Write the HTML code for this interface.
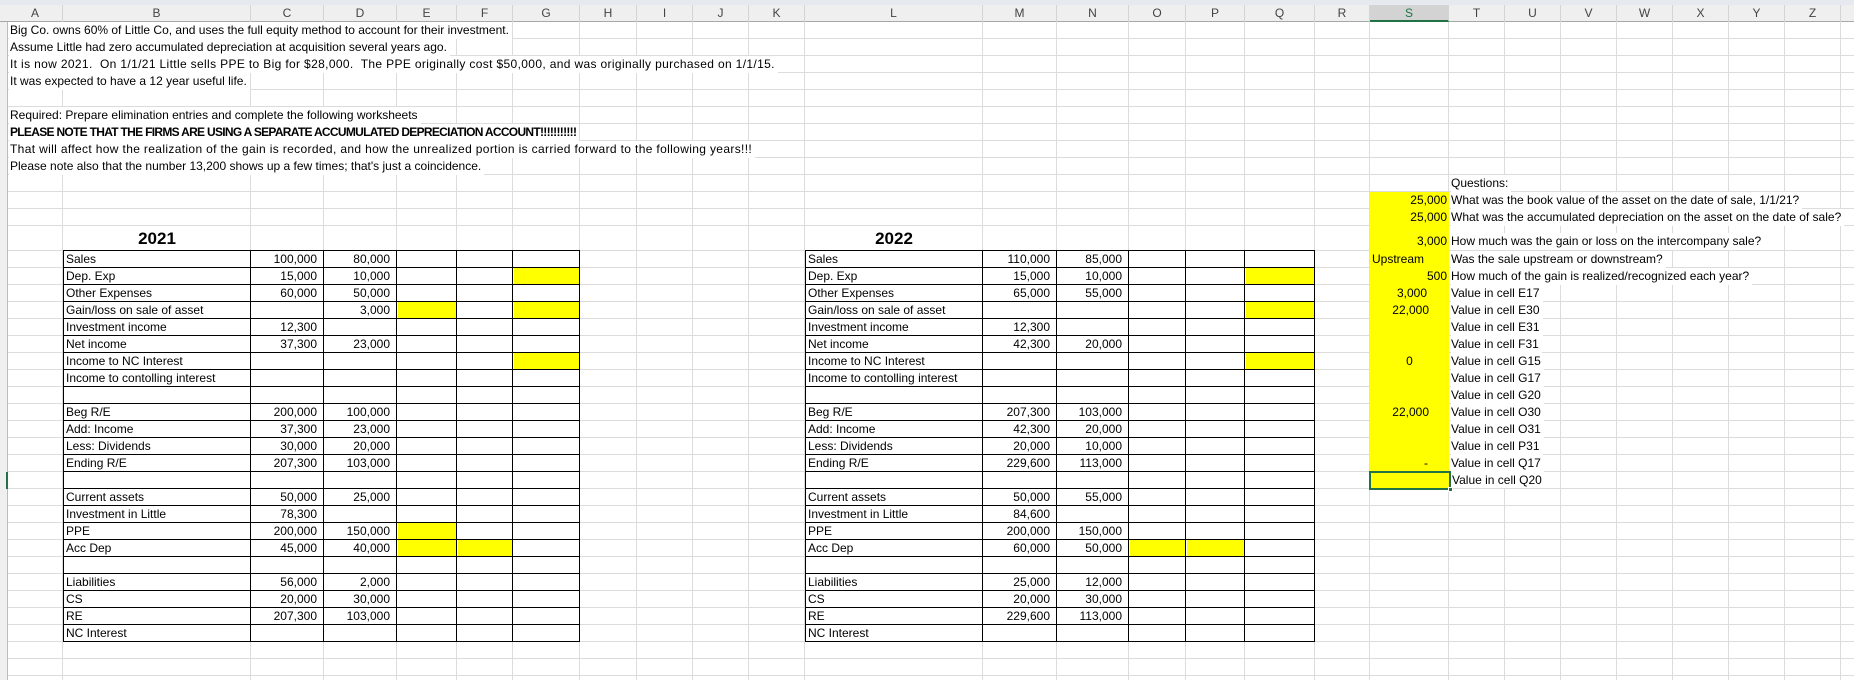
<!DOCTYPE html>
<html><head><meta charset="utf-8">
<style>
*{margin:0;padding:0;box-sizing:border-box}
html,body{width:1854px;height:680px;overflow:hidden;background:#fff}
body{position:relative;font-family:"Liberation Sans",Arial,sans-serif;font-size:12px;color:#000}
.a{position:absolute}
.t{position:absolute;height:17px;line-height:17px;white-space:nowrap;font-size:12px}
.w{background:#fff;padding-right:3px}
.r{text-align:right}
.v{position:absolute;width:1px;background:#dcdcdc;top:22px;height:658px}
.hl{position:absolute;left:8px;width:1846px;height:1px;background:#dcdcdc}
.h{position:absolute;top:5px;height:17px;line-height:17px;text-align:center;font-size:12px;color:#444;border-right:1px solid #d4d4d4}
.bv{position:absolute;width:1px;background:#000;top:250px;height:392px}
.tb{position:absolute;top:250px;height:392px;background:repeating-linear-gradient(to bottom,#000 0 1px,transparent 1px 17px)}
.y{position:absolute;background:#ffff00;height:16px}
</style></head><body>
<div class="a" style="left:0;top:0;width:1854px;height:5px;background:#e6e9ef"></div>
<div class="a" style="left:0;top:5px;width:1854px;height:17px;background:#efefef;border-bottom:1px solid #a8a8a8"></div>
<div class="a" style="left:0;top:22px;width:8px;height:658px;background:#efefef;border-right:1px solid #bcbcbc"></div>
<div class="a" style="left:6px;top:472px;width:2px;height:17px;background:#217346"></div>
<div class="h" style="left:8px;width:55px">A</div>
<div class="h" style="left:63px;width:188px">B</div>
<div class="h" style="left:251px;width:73px">C</div>
<div class="h" style="left:324px;width:73px">D</div>
<div class="h" style="left:397px;width:60px">E</div>
<div class="h" style="left:457px;width:56px">F</div>
<div class="h" style="left:513px;width:67px">G</div>
<div class="h" style="left:580px;width:57px">H</div>
<div class="h" style="left:637px;width:56px">I</div>
<div class="h" style="left:693px;width:56px">J</div>
<div class="h" style="left:749px;width:56px">K</div>
<div class="h" style="left:805px;width:178px">L</div>
<div class="h" style="left:983px;width:74px">M</div>
<div class="h" style="left:1057px;width:72px">N</div>
<div class="h" style="left:1129px;width:57px">O</div>
<div class="h" style="left:1186px;width:59px">P</div>
<div class="h" style="left:1245px;width:70px">Q</div>
<div class="h" style="left:1315px;width:55px">R</div>
<div class="h" style="left:1370px;width:79px;background:#d3d3d3;color:#217346;border-bottom:2px solid #217346">S</div>
<div class="h" style="left:1449px;width:56px">T</div>
<div class="h" style="left:1505px;width:56px">U</div>
<div class="h" style="left:1561px;width:56px">V</div>
<div class="h" style="left:1617px;width:56px">W</div>
<div class="h" style="left:1673px;width:56px">X</div>
<div class="h" style="left:1729px;width:56px">Y</div>
<div class="h" style="left:1785px;width:56px">Z</div>

<div class="v" style="left:62px"></div><div class="v" style="left:250px"></div><div class="v" style="left:323px"></div>
<div class="v" style="left:396px"></div><div class="v" style="left:456px"></div><div class="v" style="left:512px"></div>
<div class="v" style="left:579px"></div><div class="v" style="left:636px"></div><div class="v" style="left:692px"></div>
<div class="v" style="left:748px"></div><div class="v" style="left:804px"></div><div class="v" style="left:982px"></div>
<div class="v" style="left:1056px"></div><div class="v" style="left:1128px"></div><div class="v" style="left:1185px"></div>
<div class="v" style="left:1244px"></div><div class="v" style="left:1314px"></div><div class="v" style="left:1369px"></div>
<div class="v" style="left:1448px"></div><div class="v" style="left:1504px"></div><div class="v" style="left:1560px"></div>
<div class="v" style="left:1616px"></div><div class="v" style="left:1672px"></div><div class="v" style="left:1728px"></div>
<div class="v" style="left:1784px"></div><div class="v" style="left:1840px"></div>
<div class="a" style="left:8px;top:22px;width:1846px;height:204px;background:repeating-linear-gradient(to bottom,transparent 0 16px,#dcdcdc 16px 17px)"></div>
<div class="hl" style="top:250px"></div>
<div class="a" style="left:8px;top:251px;width:1846px;height:429px;background:repeating-linear-gradient(to bottom,transparent 0 16px,#dcdcdc 16px 17px)"></div>

<div class="t w" style="left:9px;top:22px;padding-left:1px">Big Co. owns 60% of Little Co, and uses the full equity method to account for their investment.</div>
<div class="t w" style="left:9px;top:39px;padding-left:1px">Assume Little had zero accumulated depreciation at acquisition several years ago.</div>
<div class="t w" style="left:9px;top:56px;padding-left:1px;letter-spacing:0.35px">It is now 2021.&nbsp; On 1/1/21 Little sells PPE to Big for $28,000.&nbsp; The PPE originally cost $50,000, and was originally purchased on 1/1/15.</div>
<div class="t w" style="left:9px;top:73px;padding-left:1px">It was expected to have a 12 year useful life.</div>
<div class="t w" style="left:9px;top:107px;padding-left:1px">Required: Prepare elimination entries and complete the following worksheets</div>
<div class="t w" style="left:9px;top:124px;padding-left:1px;font-weight:bold;letter-spacing:-0.7px">PLEASE NOTE THAT THE FIRMS ARE USING A SEPARATE ACCUMULATED DEPRECIATION ACCOUNT!!!!!!!!!!!</div>
<div class="t w" style="left:9px;top:141px;padding-left:1px;letter-spacing:0.35px">That will affect how the realization of the gain is recorded, and how the unrealized portion is carried forward to the following years!!!</div>
<div class="t w" style="left:9px;top:158px;padding-left:1px">Please note also that the number 13,200 shows up a few times; that's just a coincidence.</div>

<div class="a" style="left:63px;top:228px;width:188px;text-align:center;font-weight:bold;font-size:17px;line-height:22px">2021</div>
<div class="a" style="left:805px;top:228px;width:178px;text-align:center;font-weight:bold;font-size:17px;line-height:22px">2022</div>

<div class="y" style="left:514px;top:268px;width:65px"></div>
<div class="y" style="left:398px;top:302px;width:58px"></div>
<div class="y" style="left:514px;top:302px;width:65px"></div>
<div class="y" style="left:514px;top:353px;width:65px"></div>
<div class="y" style="left:398px;top:523px;width:58px"></div>
<div class="y" style="left:398px;top:540px;width:58px"></div>
<div class="y" style="left:458px;top:540px;width:54px"></div>
<div class="y" style="left:1246px;top:268px;width:68px"></div>
<div class="y" style="left:1246px;top:302px;width:68px"></div>
<div class="y" style="left:1246px;top:353px;width:68px"></div>
<div class="y" style="left:1130px;top:540px;width:55px"></div>
<div class="y" style="left:1187px;top:540px;width:57px"></div>

<div class="tb" style="left:63px;width:517px"></div>
<div class="bv" style="left:63px"></div><div class="bv" style="left:250px"></div><div class="bv" style="left:323px"></div>
<div class="bv" style="left:396px"></div><div class="bv" style="left:456px"></div><div class="bv" style="left:512px"></div><div class="bv" style="left:579px"></div>
<div class="tb" style="left:805px;width:510px"></div>
<div class="bv" style="left:805px"></div><div class="bv" style="left:982px"></div><div class="bv" style="left:1056px"></div>
<div class="bv" style="left:1128px"></div><div class="bv" style="left:1185px"></div><div class="bv" style="left:1244px"></div><div class="bv" style="left:1314px"></div>

<div class="t" style="left:66px;top:251px">Sales</div>
<div class="t" style="left:66px;top:268px">Dep. Exp</div>
<div class="t" style="left:66px;top:285px">Other Expenses</div>
<div class="t" style="left:66px;top:302px">Gain/loss on sale of asset</div>
<div class="t" style="left:66px;top:319px">Investment income</div>
<div class="t" style="left:66px;top:336px">Net income</div>
<div class="t" style="left:66px;top:353px">Income to NC Interest</div>
<div class="t" style="left:66px;top:370px">Income to contolling interest</div>
<div class="t" style="left:66px;top:404px">Beg R/E</div>
<div class="t" style="left:66px;top:421px">Add: Income</div>
<div class="t" style="left:66px;top:438px">Less: Dividends</div>
<div class="t" style="left:66px;top:455px">Ending R/E</div>
<div class="t" style="left:66px;top:489px">Current assets</div>
<div class="t" style="left:66px;top:506px">Investment in Little</div>
<div class="t" style="left:66px;top:523px">PPE</div>
<div class="t" style="left:66px;top:540px">Acc Dep</div>
<div class="t" style="left:66px;top:574px">Liabilities</div>
<div class="t" style="left:66px;top:591px">CS</div>
<div class="t" style="left:66px;top:608px">RE</div>
<div class="t" style="left:66px;top:625px">NC Interest</div>
<div class="t r" style="left:251px;width:66px;top:251px">100,000</div>
<div class="t r" style="left:251px;width:66px;top:268px">15,000</div>
<div class="t r" style="left:251px;width:66px;top:285px">60,000</div>
<div class="t r" style="left:251px;width:66px;top:319px">12,300</div>
<div class="t r" style="left:251px;width:66px;top:336px">37,300</div>
<div class="t r" style="left:251px;width:66px;top:404px">200,000</div>
<div class="t r" style="left:251px;width:66px;top:421px">37,300</div>
<div class="t r" style="left:251px;width:66px;top:438px">30,000</div>
<div class="t r" style="left:251px;width:66px;top:455px">207,300</div>
<div class="t r" style="left:251px;width:66px;top:489px">50,000</div>
<div class="t r" style="left:251px;width:66px;top:506px">78,300</div>
<div class="t r" style="left:251px;width:66px;top:523px">200,000</div>
<div class="t r" style="left:251px;width:66px;top:540px">45,000</div>
<div class="t r" style="left:251px;width:66px;top:574px">56,000</div>
<div class="t r" style="left:251px;width:66px;top:591px">20,000</div>
<div class="t r" style="left:251px;width:66px;top:608px">207,300</div>
<div class="t r" style="left:324px;width:66px;top:251px">80,000</div>
<div class="t r" style="left:324px;width:66px;top:268px">10,000</div>
<div class="t r" style="left:324px;width:66px;top:285px">50,000</div>
<div class="t r" style="left:324px;width:66px;top:302px">3,000</div>
<div class="t r" style="left:324px;width:66px;top:336px">23,000</div>
<div class="t r" style="left:324px;width:66px;top:404px">100,000</div>
<div class="t r" style="left:324px;width:66px;top:421px">23,000</div>
<div class="t r" style="left:324px;width:66px;top:438px">20,000</div>
<div class="t r" style="left:324px;width:66px;top:455px">103,000</div>
<div class="t r" style="left:324px;width:66px;top:489px">25,000</div>
<div class="t r" style="left:324px;width:66px;top:523px">150,000</div>
<div class="t r" style="left:324px;width:66px;top:540px">40,000</div>
<div class="t r" style="left:324px;width:66px;top:574px">2,000</div>
<div class="t r" style="left:324px;width:66px;top:591px">30,000</div>
<div class="t r" style="left:324px;width:66px;top:608px">103,000</div>

<div class="t" style="left:808px;top:251px">Sales</div>
<div class="t" style="left:808px;top:268px">Dep. Exp</div>
<div class="t" style="left:808px;top:285px">Other Expenses</div>
<div class="t" style="left:808px;top:302px">Gain/loss on sale of asset</div>
<div class="t" style="left:808px;top:319px">Investment income</div>
<div class="t" style="left:808px;top:336px">Net income</div>
<div class="t" style="left:808px;top:353px">Income to NC Interest</div>
<div class="t" style="left:808px;top:370px">Income to contolling interest</div>
<div class="t" style="left:808px;top:404px">Beg R/E</div>
<div class="t" style="left:808px;top:421px">Add: Income</div>
<div class="t" style="left:808px;top:438px">Less: Dividends</div>
<div class="t" style="left:808px;top:455px">Ending R/E</div>
<div class="t" style="left:808px;top:489px">Current assets</div>
<div class="t" style="left:808px;top:506px">Investment in Little</div>
<div class="t" style="left:808px;top:523px">PPE</div>
<div class="t" style="left:808px;top:540px">Acc Dep</div>
<div class="t" style="left:808px;top:574px">Liabilities</div>
<div class="t" style="left:808px;top:591px">CS</div>
<div class="t" style="left:808px;top:608px">RE</div>
<div class="t" style="left:808px;top:625px">NC Interest</div>
<div class="t r" style="left:983px;width:67px;top:251px">110,000</div>
<div class="t r" style="left:983px;width:67px;top:268px">15,000</div>
<div class="t r" style="left:983px;width:67px;top:285px">65,000</div>
<div class="t r" style="left:983px;width:67px;top:319px">12,300</div>
<div class="t r" style="left:983px;width:67px;top:336px">42,300</div>
<div class="t r" style="left:983px;width:67px;top:404px">207,300</div>
<div class="t r" style="left:983px;width:67px;top:421px">42,300</div>
<div class="t r" style="left:983px;width:67px;top:438px">20,000</div>
<div class="t r" style="left:983px;width:67px;top:455px">229,600</div>
<div class="t r" style="left:983px;width:67px;top:489px">50,000</div>
<div class="t r" style="left:983px;width:67px;top:506px">84,600</div>
<div class="t r" style="left:983px;width:67px;top:523px">200,000</div>
<div class="t r" style="left:983px;width:67px;top:540px">60,000</div>
<div class="t r" style="left:983px;width:67px;top:574px">25,000</div>
<div class="t r" style="left:983px;width:67px;top:591px">20,000</div>
<div class="t r" style="left:983px;width:67px;top:608px">229,600</div>
<div class="t r" style="left:1057px;width:65px;top:251px">85,000</div>
<div class="t r" style="left:1057px;width:65px;top:268px">10,000</div>
<div class="t r" style="left:1057px;width:65px;top:285px">55,000</div>
<div class="t r" style="left:1057px;width:65px;top:336px">20,000</div>
<div class="t r" style="left:1057px;width:65px;top:404px">103,000</div>
<div class="t r" style="left:1057px;width:65px;top:421px">20,000</div>
<div class="t r" style="left:1057px;width:65px;top:438px">10,000</div>
<div class="t r" style="left:1057px;width:65px;top:455px">113,000</div>
<div class="t r" style="left:1057px;width:65px;top:489px">55,000</div>
<div class="t r" style="left:1057px;width:65px;top:523px">150,000</div>
<div class="t r" style="left:1057px;width:65px;top:540px">50,000</div>
<div class="t r" style="left:1057px;width:65px;top:574px">12,000</div>
<div class="t r" style="left:1057px;width:65px;top:591px">30,000</div>
<div class="t r" style="left:1057px;width:65px;top:608px">113,000</div>

<div class="a" style="left:1370px;top:192px;width:79px;height:297px;background:#ffff00"></div>
<div class="t r" style="left:1370px;width:77px;top:192px">25,000</div>
<div class="t r" style="left:1370px;width:77px;top:209px">25,000</div>
<div class="t r" style="left:1370px;width:77px;top:233px">3,000</div>
<div class="t" style="left:1372px;top:251px">Upstream</div>
<div class="t r" style="left:1370px;width:77px;top:268px">500</div>
<div class="t r" style="left:1370px;width:57px;top:285px">3,000</div>
<div class="t r" style="left:1370px;width:59px;top:302px">22,000</div>
<div class="t" style="left:1370px;width:79px;top:353px;text-align:center">0</div>
<div class="t r" style="left:1370px;width:59px;top:404px">22,000</div>
<div class="t r" style="left:1370px;width:58px;top:455px">-</div>
<div class="a" style="left:1369px;top:471px;width:82px;height:19px;border:2px solid #217346"></div>
<div class="a" style="left:1448px;top:487px;width:5px;height:5px;background:#217346;border:1px solid #fff"></div>

<div class="t w" style="left:1451px;top:175px">Questions:</div>
<div class="t w" style="left:1451px;top:192px">What was the book value of the asset on the date of sale, 1/1/21?</div>
<div class="t w" style="left:1451px;top:209px">What was the accumulated depreciation on the asset on the date of sale?</div>
<div class="t w" style="left:1451px;top:233px">How much was the gain or loss on the intercompany sale?</div>
<div class="t w" style="left:1451px;top:251px">Was the sale upstream or downstream?</div>
<div class="t w" style="left:1451px;top:268px">How much of the gain is realized/recognized each year?</div>
<div class="t w" style="left:1451px;top:285px">Value in cell E17</div>
<div class="t w" style="left:1451px;top:302px">Value in cell E30</div>
<div class="t w" style="left:1451px;top:319px">Value in cell E31</div>
<div class="t w" style="left:1451px;top:336px">Value in cell F31</div>
<div class="t w" style="left:1451px;top:353px">Value in cell G15</div>
<div class="t w" style="left:1451px;top:370px">Value in cell G17</div>
<div class="t w" style="left:1451px;top:387px">Value in cell G20</div>
<div class="t w" style="left:1451px;top:404px">Value in cell O30</div>
<div class="t w" style="left:1451px;top:421px">Value in cell O31</div>
<div class="t w" style="left:1451px;top:438px">Value in cell P31</div>
<div class="t w" style="left:1451px;top:455px">Value in cell Q17</div>
<div class="t w" style="left:1452px;top:472px;height:16px;line-height:16px">Value in cell Q20</div>
</body></html>
